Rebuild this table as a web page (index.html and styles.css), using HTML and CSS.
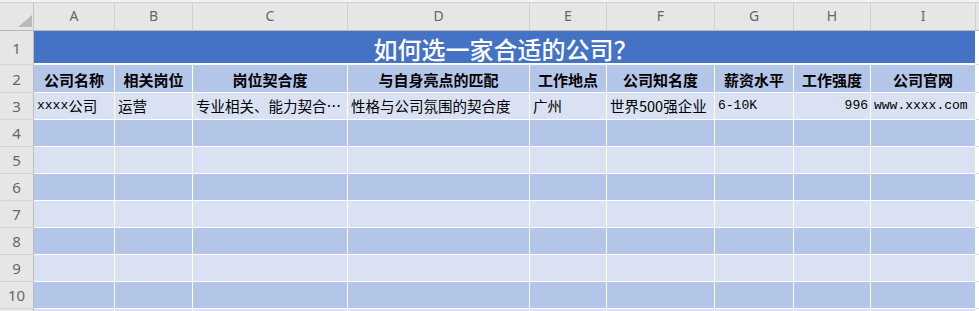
FILE: index.html
```html
<!DOCTYPE html>
<html lang="zh-CN">
<head>
<meta charset="utf-8">
<title>如何选一家合适的公司？</title>
<link rel="stylesheet" href="styles.css">
</head>
<body>
<div class="sheet">
  <div class="topband"></div>
  <div class="row colhead">
    <div class="hc corner"><svg width="14" height="12" viewBox="0 0 14 12"><polygon points="0,12 14,12 14,0" fill="#b9b9b9"/></svg></div>
    <div class="hc">A</div><div class="hc">B</div><div class="hc">C</div><div class="hc">D</div><div class="hc">E</div><div class="hc">F</div><div class="hc">G</div><div class="hc">H</div><div class="hc">I</div><div class="hc edge"></div>
  </div>
  <div class="row r1">
    <div class="rh">1</div>
    <div class="title">如何选一家合适的公司？</div>
    <div class="blank"></div>
  </div>
  <div class="row r2 dark">
    <div class="rh">2</div>
    <div class="c th">公司名称</div><div class="c th">相关岗位</div><div class="c th">岗位契合度</div><div class="c th">与自身亮点的匹配</div><div class="c th">工作地点</div><div class="c th">公司知名度</div><div class="c th">薪资水平</div><div class="c th">工作强度</div><div class="c th">公司官网</div>
    <div class="blank"></div>
  </div>
  <div class="row light">
    <div class="rh">3</div>
    <div class="c"><span class="mono">xxxx</span>公司</div>
    <div class="c">运营</div>
    <div class="c">专业相关、能力契合…</div>
    <div class="c">性格与公司氛围的契合度</div>
    <div class="c">广州</div>
    <div class="c">世界500强企业</div>
    <div class="c"><span class="mono">6-10K</span></div>
    <div class="c right"><span class="mono">996</span></div>
    <div class="c"><span class="mono">www.xxxx.com</span></div>
    <div class="blank"></div>
  </div>
  <div class="row dark"><div class="rh">4</div><div class="c"></div><div class="c"></div><div class="c"></div><div class="c"></div><div class="c"></div><div class="c"></div><div class="c"></div><div class="c"></div><div class="c"></div><div class="blank"></div></div>
  <div class="row light"><div class="rh">5</div><div class="c"></div><div class="c"></div><div class="c"></div><div class="c"></div><div class="c"></div><div class="c"></div><div class="c"></div><div class="c"></div><div class="c"></div><div class="blank"></div></div>
  <div class="row dark"><div class="rh">6</div><div class="c"></div><div class="c"></div><div class="c"></div><div class="c"></div><div class="c"></div><div class="c"></div><div class="c"></div><div class="c"></div><div class="c"></div><div class="blank"></div></div>
  <div class="row light"><div class="rh">7</div><div class="c"></div><div class="c"></div><div class="c"></div><div class="c"></div><div class="c"></div><div class="c"></div><div class="c"></div><div class="c"></div><div class="c"></div><div class="blank"></div></div>
  <div class="row dark"><div class="rh">8</div><div class="c"></div><div class="c"></div><div class="c"></div><div class="c"></div><div class="c"></div><div class="c"></div><div class="c"></div><div class="c"></div><div class="c"></div><div class="blank"></div></div>
  <div class="row light"><div class="rh">9</div><div class="c"></div><div class="c"></div><div class="c"></div><div class="c"></div><div class="c"></div><div class="c"></div><div class="c"></div><div class="c"></div><div class="c"></div><div class="blank"></div></div>
  <div class="row dark"><div class="rh">10</div><div class="c"></div><div class="c"></div><div class="c"></div><div class="c"></div><div class="c"></div><div class="c"></div><div class="c"></div><div class="c"></div><div class="c"></div><div class="blank"></div></div>
  <div class="row light"><div class="rh"></div><div class="c"></div><div class="c"></div><div class="c"></div><div class="c"></div><div class="c"></div><div class="c"></div><div class="c"></div><div class="c"></div><div class="c"></div><div class="blank"></div></div>
</div>
</body>
</html>
```

FILE: styles.css
```css
html, body {
  margin: 0;
  padding: 0;
  background: #ffffff;
  overflow: hidden;
}
.sheet {
  width: 979px;
  height: 311px;
  overflow: hidden;
  font-family: "Noto Sans CJK SC", "Noto Sans", sans-serif;
  color: #000;
}
.topband {
  height: 2px;
  background: #f3f3f3;
  border-bottom: 1px solid #d2d2d2;
}
.row {
  display: grid;
  grid-template-columns: 34px 81px 78px 155px 182px 77px 108px 79px 77px 105px 3px;
  height: 27px;
}
.row > div {
  box-sizing: border-box;
  min-width: 0;
  overflow: hidden;
  white-space: nowrap;
}
.colhead {
  height: 28px;
  background: #e6e6e6;
}
.hc {
  border-right: 1px solid #d0d0d0;
  border-bottom: 1px solid #b8b8b8;
  display: flex;
  align-items: center;
  justify-content: center;
  font-family: "Noto Sans", "Open Sans", sans-serif;
  font-size: 14px;
  color: #666;
  line-height: 1;
  padding-bottom: 1px;
}
.hc.corner {
  justify-content: flex-end;
  align-items: flex-end;
  padding: 0 1px 3px 0;
  border-right: 1px solid #c4c4c4;
}
.hc.edge {
  border-right: none;
}
.rh {
  background: #e6e6e6;
  border-right: 1px solid #bdbdbd;
  border-bottom: 1px solid #d4d4d4;
  display: flex;
  align-items: center;
  justify-content: center;
  font-family: "Noto Sans", "Open Sans", sans-serif;
  font-size: 15px;
  color: #666;
  line-height: 1;
  padding-top: 1px;
}
.r1 {
  height: 34px;
}
.r2 {
  height: 28px;
}
.title {
  grid-column: 2 / span 9;
  background: #4472c4;
  border-bottom: 2px solid #ffffff;
  border-right: 1px solid #ffffff;
  color: #ffffff;
  font-size: 24px;
  font-weight: 500;
  display: flex;
  align-items: center;
  justify-content: center;
  line-height: 1;
  padding: 3px 0 0 2px;
}
.blank {
  background: #ffffff;
  border-bottom: 1px solid #d9d9d9;
}
.c {
  border-right: 1px solid #ffffff;
  border-bottom: 1px solid #ffffff;
  display: flex;
  align-items: flex-end;
  padding: 0 0 4px 3px;
  font-size: 14.5px;
  line-height: 18px;
  text-overflow: ellipsis;
}
.dark .c {
  background: #b4c6e7;
}
.light .c {
  background: #d9e1f2;
}
.c.th {
  justify-content: center;
  font-weight: 700;
  font-size: 15px;
  padding: 0 0 3px 0;
}
.c.right {
  justify-content: flex-end;
  padding-right: 2px;
}
.mono {
  font-family: "Liberation Mono", monospace;
  font-size: 13px;
}
```
